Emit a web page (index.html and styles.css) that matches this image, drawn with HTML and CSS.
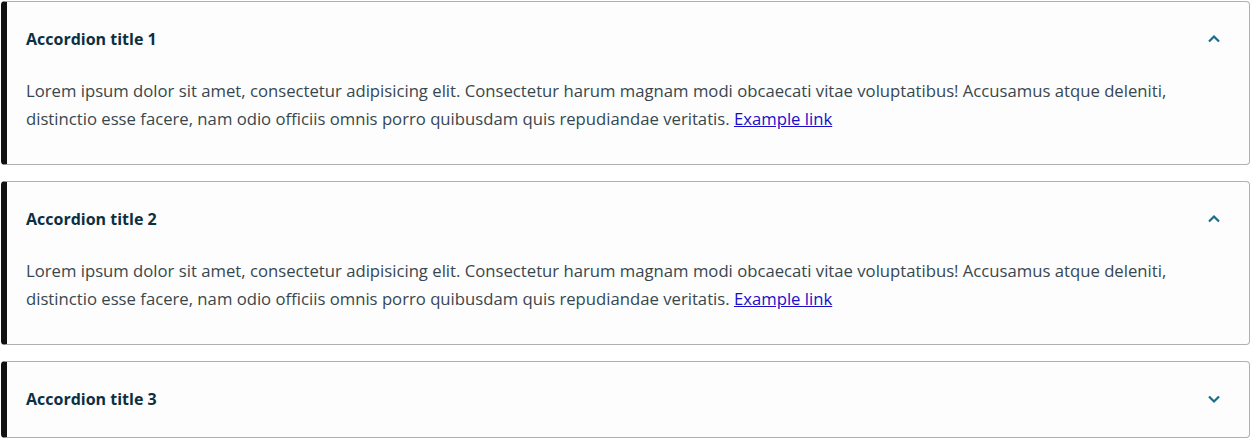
FILE: index.html
```html
<!DOCTYPE html>
<html>
<head>
<meta charset="utf-8">
<link rel="stylesheet" href="styles.css">
</head>
<body>

<div class="accordion">

  <div class="acc-item open">
    <div class="acc-head">
      <span class="acc-title">Accordion title 1</span>
      <svg class="chev" width="14" height="10" viewBox="0 0 14 10"><path d="M2 7.5 L7 2.5 L12 7.5" fill="none" stroke="currentColor" stroke-width="2.2"/></svg>
    </div>
    <div class="acc-body">
      Lorem ipsum dolor sit amet, consectetur adipisicing elit. Consectetur harum magnam modi obcaecati vitae voluptatibus! Accusamus atque deleniti, distinctio esse facere, nam odio officiis omnis porro quibusdam quis repudiandae veritatis. <a href="#">Example link</a>
    </div>
  </div>

  <div class="acc-item open">
    <div class="acc-head">
      <span class="acc-title">Accordion title 2</span>
      <svg class="chev" width="14" height="10" viewBox="0 0 14 10"><path d="M2 7.5 L7 2.5 L12 7.5" fill="none" stroke="currentColor" stroke-width="2.2"/></svg>
    </div>
    <div class="acc-body">
      Lorem ipsum dolor sit amet, consectetur adipisicing elit. Consectetur harum magnam modi obcaecati vitae voluptatibus! Accusamus atque deleniti, distinctio esse facere, nam odio officiis omnis porro quibusdam quis repudiandae veritatis. <a href="#">Example link</a>
    </div>
  </div>

  <div class="acc-item">
    <div class="acc-head">
      <span class="acc-title">Accordion title 3</span>
      <svg class="chev" width="14" height="10" viewBox="0 0 14 10"><path d="M2 2.5 L7 7.5 L12 2.5" fill="none" stroke="currentColor" stroke-width="2.2"/></svg>
    </div>
  </div>

</div>

</body>
</html>
```

FILE: styles.css
```css
body {
	margin: 1px;
	background: #fff;
	font-family: "Open Sans", "Lato", sans-serif;
	color: #37474f;
}
.accordion {
	display: flex;
	flex-direction: column;
	gap: 16px;
}
.acc-item {
	border: 1px solid #b0b0b0;
	border-left: 6px solid #111;
	border-radius: 4px;
	background: #fdfdfd;
}
.acc-head {
	display: flex;
	align-items: center;
	justify-content: space-between;
	padding: 23px 20px 24px 19px;
	line-height: 28px;
}
.acc-title {
	font-size: 16px;
	font-weight: bold;
	color: #0b3042;
}
.chev {
	color: #1b6b8c;
	margin-right: 8px;
}
.acc-body {
	padding: 0 20px 31px 19px;
	font-size: 16.7px;
	line-height: 28px;
}
.acc-body a {
	color: #1a0dcc;
}
```
